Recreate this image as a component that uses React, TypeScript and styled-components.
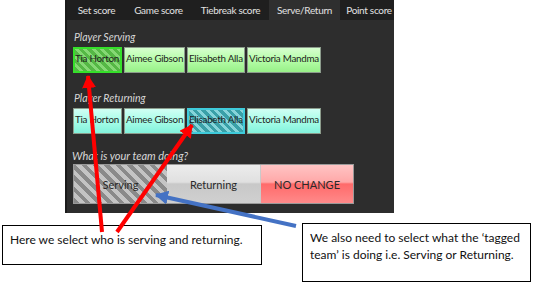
import React, { useState } from 'react';
import styled, { createGlobalStyle, css } from 'styled-components';

const players = [
  { id: 1, name: 'Tia Horton', w: 49 },
  { id: 2, name: 'Aimee Gibson', w: 61 },
  { id: 3, name: 'Elisabeth Alla', w: 58 },
  { id: 4, name: 'Victoria Mandma', w: 74 },
];

const tabs = [
  { label: 'Set score', w: 57 },
  { label: 'Game score', w: 67 },
  { label: 'Tiebreak score', w: 77 },
  { label: 'Serve/Return', w: 71 },
  { label: 'Point score', w: 58 },
];

type Kind = 'serve' | 'return';

const uiFont = `Lato, 'Open Sans', sans-serif`;

export default function App() {
  const [server, setServer] = useState(1);
  const [returner, setReturner] = useState(3);
  const [doing, setDoing] = useState('serving');

  return (
    <Page>
      <GlobalStyle />
      <Screen>
        <TabBar>
          {tabs.map((t) => (
            <Tab key={t.label} $w={t.w} $active={t.label === 'Serve/Return'}>
              {t.label}
            </Tab>
          ))}
        </TabBar>
        <Body>
          <Label>Player Serving</Label>
          <PlayerRow>
            {players.map((p) => (
              <PlayerButton
                key={p.id}
                $kind="serve"
                $w={p.w}
                $selected={server === p.id}
                onClick={() => setServer(p.id)}
              >
                {p.name}
              </PlayerButton>
            ))}
          </PlayerRow>
          <Label $gap={17}>Player Returning</Label>
          <PlayerRow>
            {players.map((p) => (
              <PlayerButton
                key={p.id}
                $kind="return"
                $w={p.w}
                $selected={returner === p.id}
                onClick={() => setReturner(p.id)}
              >
                {p.name}
              </PlayerButton>
            ))}
          </PlayerRow>
          <Label $gap={14} $big>
            What is your team doing?
          </Label>
          <TeamRow>
            <TeamButton $tone="grey" $selected={doing === 'serving'} onClick={() => setDoing('serving')}>
              Serving
            </TeamButton>
            <TeamButton $tone="grey" $selected={doing === 'returning'} onClick={() => setDoing('returning')}>
              Returning
            </TeamButton>
            <TeamButton $tone="red" onClick={() => setDoing('none')}>
              NO CHANGE
            </TeamButton>
          </TeamRow>
        </Body>
      </Screen>

      <Notes>
        <Note $w={260} $h={40} $top={2}>
          Here we select who is serving and returning.
        </Note>
        <Note $w={229} $h={59} $left={40}>
          We also need to select what the ‘tagged team’ is doing i.e. Serving or Returning.
        </Note>
      </Notes>

      {/* callout arrows drawn over the screenshot */}
      <Arrows width="533" height="284" viewBox="0 0 533 284">
        <defs>
          <marker id="redHead" markerUnits="userSpaceOnUse" markerWidth="14" markerHeight="14" refX="12" refY="7" orient="auto">
            <path d="M0,0 L13,7 L0,14 Z" fill="#ff0000" />
          </marker>
          <marker id="blueHead" markerUnits="userSpaceOnUse" markerWidth="14" markerHeight="14" refX="12" refY="7" orient="auto">
            <path d="M0,0 L13,7 L0,14 Z" fill="#4472c4" />
          </marker>
        </defs>
        <line x1="102" y1="232" x2="88" y2="76" stroke="#ff0000" strokeWidth="4" markerEnd="url(#redHead)" />
        <line x1="117" y1="232" x2="192" y2="125" stroke="#ff0000" strokeWidth="4" markerEnd="url(#redHead)" />
        <line x1="296" y1="226" x2="156" y2="195" stroke="#4472c4" strokeWidth="4" markerEnd="url(#blueHead)" />
      </Arrows>
    </Page>
  );
}

const GlobalStyle = createGlobalStyle`
  html, body {
    margin: 0;
    padding: 0;
    background: #ffffff;
  }
  body {
    font-family: ${uiFont};
  }
`;

const Page = styled.div`
  position: relative;
  width: 533px;
  height: 284px;
  overflow: hidden;
  background: #fff;
`;

const Screen = styled.div`
  margin-left: 65px;
  width: 329px;
  height: 213px;
  background: #2d2d2d;
  border-left: 2px solid #1b1b1b;
  box-sizing: border-box;
  display: flex;
  flex-direction: column;
`;

const TabBar = styled.div`
  display: flex;
  height: 20px;
  padding-left: 1px;
  background: #1f1f1f;
  overflow: hidden;
`;

const Tab = styled.div<{ $w: number; $active?: boolean }>`
  flex: none;
  display: flex;
  align-items: center;
  justify-content: center;
  width: ${(p) => p.$w}px;
  font-size: 10px;
  letter-spacing: -0.3px;
  color: #e2e2e2;
  white-space: nowrap;
  background: ${(p) => (p.$active ? '#2f2f2f' : 'transparent')};
`;

const Body = styled.div`
  display: flex;
  flex-direction: column;
  align-items: flex-start;
  padding: 9px 0 0 5px;
`;

const Label = styled.div<{ $gap?: number; $big?: boolean }>`
  margin-top: ${(p) => p.$gap ?? 0}px;
  margin-left: ${(p) => (p.$big ? 0 : 2)}px;
  margin-bottom: ${(p) => (p.$big ? 0 : 2)}px;
  height: 16px;
  line-height: 16px;
  font-size: ${(p) => (p.$big ? 11 : 10.5)}px;
  font-style: italic;
  color: #d8d8d8;
`;

const PlayerRow = styled.div`
  display: flex;
  gap: 2px;
  margin-left: 1px;
`;

const stripes = (a: string, b: string, size = 3) => css`
  background: repeating-linear-gradient(45deg, ${a} 0 ${size}px, ${b} ${size}px ${size * 2}px);
`;

const PlayerButton = styled.button<{ $kind: Kind; $w: number; $selected?: boolean }>`
  width: ${(p) => p.$w}px;
  height: 26px;
  padding: 0 0 4px 1px;
  box-sizing: border-box;
  overflow: hidden;
  white-space: nowrap;
  text-align: left;
  font-family: ${uiFont};
  font-size: 9.8px;
  letter-spacing: -0.25px;
  color: #1e1e1e;
  cursor: pointer;
  border: 1px solid #8c9c8c;
  ${(p) =>
    p.$kind === 'serve'
      ? p.$selected
        ? css`
            ${stripes('#55b845', '#85d874')};
            border: 2px solid #35e02a;
            padding-left: 0;
          `
        : css`
            background: linear-gradient(#d6ffcf, #b6fda8 50%, #98f088);
          `
      : p.$selected
      ? css`
          ${stripes('#3aa0a8', '#86d4da')};
          border: 2px solid #3fcbdb;
          padding-left: 0;
        `
      : css`
          background: linear-gradient(#d0fff4, #a8fde8 50%, #82f2dc);
        `}
`;

const TeamRow = styled.div`
  display: flex;
  margin-left: 1px;
  border: 1px solid #9a9a9a;
`;

const TeamButton = styled.button<{ $tone: 'grey' | 'red'; $selected?: boolean }>`
  width: 93px;
  height: 38px;
  box-sizing: border-box;
  border: none;
  font-family: ${uiFont};
  font-size: 11px;
  color: #2a2a2a;
  cursor: pointer;
  ${(p) =>
    p.$tone === 'red'
      ? css`
          background: linear-gradient(#ffc4c4, #ffa8a8 45%, #ff6a6a 50%, #ff8a8a);
          border-left: 1px solid #c9c9c9;
        `
      : p.$selected
      ? stripes('#8a8a8a', '#c4c4c4', 4)
      : css`
          background: linear-gradient(#ececec, #e0e0e0 45%, #c8c8c8 50%, #d0d0d0);
        `}
`;

const Notes = styled.div`
  display: flex;
  align-items: flex-start;
  margin-top: 10px;
  padding-left: 2px;
`;

const Note = styled.div<{ $w: number; $h: number; $top?: number; $left?: number }>`
  width: ${(p) => p.$w}px;
  height: ${(p) => p.$h}px;
  margin-top: ${(p) => p.$top ?? 0}px;
  margin-left: ${(p) => p.$left ?? 0}px;
  box-sizing: border-box;
  border: 1px solid #000;
  padding: 5px 0 0 7px;
  font-family: ${uiFont};
  font-size: 12px;
  line-height: 17px;
  color: #111;
`;

const Arrows = styled.svg`
  position: absolute;
  left: 0;
  top: 0;
  pointer-events: none;
`;
